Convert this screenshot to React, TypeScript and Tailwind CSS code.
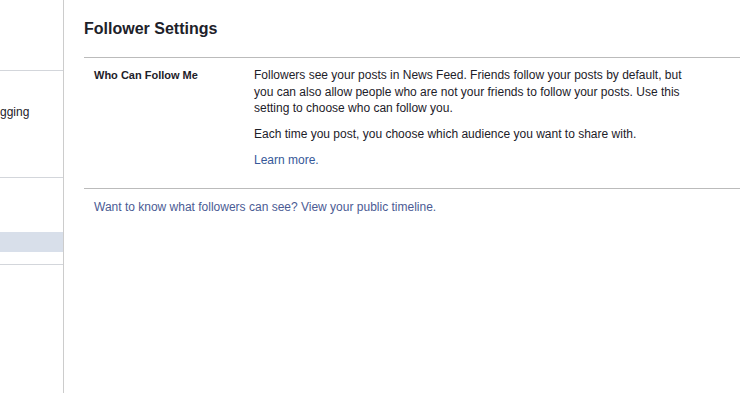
import React from 'react'

function Sidebar() {
  return (
    <div className="w-[64px] shrink-0 border-r border-[#cccccc] min-h-[393px] overflow-hidden">
      <div className="h-[71px] border-b border-[#d3d6db]"></div>
      <div className="h-[107px] border-b border-[#d3d6db] pt-[31px]">
        <div className="h-[20px] leading-[20px] text-[12px] text-[#1d2129] whitespace-nowrap">gging</div>
      </div>
      <div className="h-[87px] border-b border-[#d3d6db] pt-[54px]">
        <div className="h-[20px] bg-[#d8dfea]"></div>
      </div>
    </div>
  )
}

function App() {
  return (
    <div className="flex w-[740px] min-h-[393px] bg-white font-['Liberation_Sans',Arial,sans-serif] overflow-hidden">
      <Sidebar />

      <div className="flex-1 pl-[20px] pt-[19px]">
        <h2 className="text-[16px] leading-[20px] font-bold text-[#1d2129] mb-[18px]">Follower Settings</h2>

        <div className="border-t border-[#bbbbbb] flex pl-[10px] pt-[9px] pb-[19px] text-[12px] text-[#1d2129]">
          <div className="w-[160px] shrink-0 text-[11px] font-bold leading-[16px]">Who Can Follow Me</div>
          <div className="w-[440px] leading-[16.5px]">
            <p className="mb-[9px]">
              Followers see your posts in News Feed. Friends follow your posts by default, but you can also allow people who are not your friends to follow your posts. Use this setting to choose who can follow you.
            </p>
            <p className="mb-[10px]">Each time you post, you choose which audience you want to share with.</p>
            <a className="text-[#365899]">Learn more.</a>
          </div>
        </div>

        <div className="border-t border-[#bbbbbb] pl-[10px] pt-[10px] text-[12px] leading-[16px] text-[#4b5b94]">
          Want to know what followers can see? View your public timeline.
        </div>
      </div>
    </div>
  )
}

export default App
